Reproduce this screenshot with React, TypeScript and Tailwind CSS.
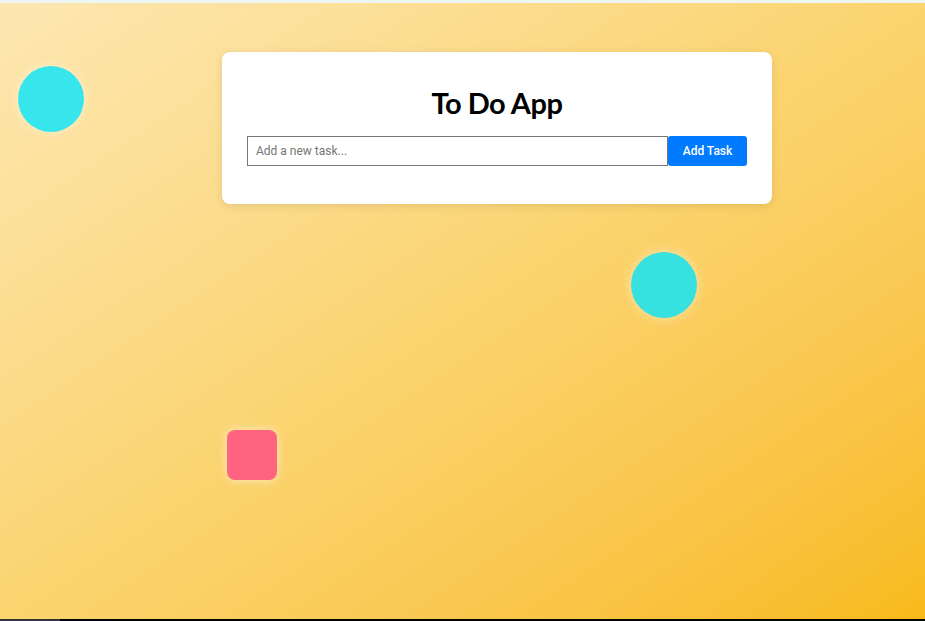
export default function App() {
  return (
    <div className="w-[925px] h-[621px] flex flex-col overflow-hidden bg-black" style={{ fontFamily: "Roboto, 'Liberation Sans', sans-serif" }}>
      <div className="h-[3px] bg-[#eef6f3] shrink-0" />
      <div className="relative flex-1 bg-gradient-to-br from-[#fde7b1] via-[#fbd46f] to-[#f8ba18] flex justify-start items-start pt-[49px] pl-[222px]">
        <div className="absolute left-[18px] top-[63px] w-[66px] h-[66px] rounded-full bg-[#36e6ec] shadow-[0_0_10px_rgba(255,255,255,0.5)]" />
        <div className="absolute left-[631px] top-[249px] w-[66px] h-[66px] rounded-full bg-[#36e1df] shadow-[0_0_12px_rgba(255,255,255,0.5)]" />
        <div className="absolute left-[227px] top-[427px] w-[50px] h-[50px] rounded-lg bg-[#ff6380] shadow-[0_0_10px_rgba(255,255,255,0.6)]" />
        <div className="relative w-[550px] h-[152px] bg-white rounded-lg shadow-[0_2px_10px_rgba(0,0,0,0.1)] px-[25px] pt-[33px]">
          <h1 className="text-center text-[29px] leading-[36px] font-bold text-black tracking-[-0.5px]" style={{ fontFamily: "Lato, 'Noto Sans', sans-serif" }}>To Do App</h1>
          <div className="flex mt-[15px]">
            <input
              className="w-[421px] h-[30px] border border-[#767676] px-[8px] text-[12px] text-[#333] placeholder:text-[#757575] outline-none"
              placeholder="Add a new task..."
            />
            <button className="w-[79px] h-[30px] bg-[#007bff] text-white text-[12px] font-medium rounded-[3px]">Add Task</button>
          </div>
        </div>
      </div>
      <div className="h-[2px] shrink-0 flex">
        <div className="w-[60px] bg-[#333]" />
        <div className="flex-1 bg-black" />
      </div>
    </div>
  );
}
